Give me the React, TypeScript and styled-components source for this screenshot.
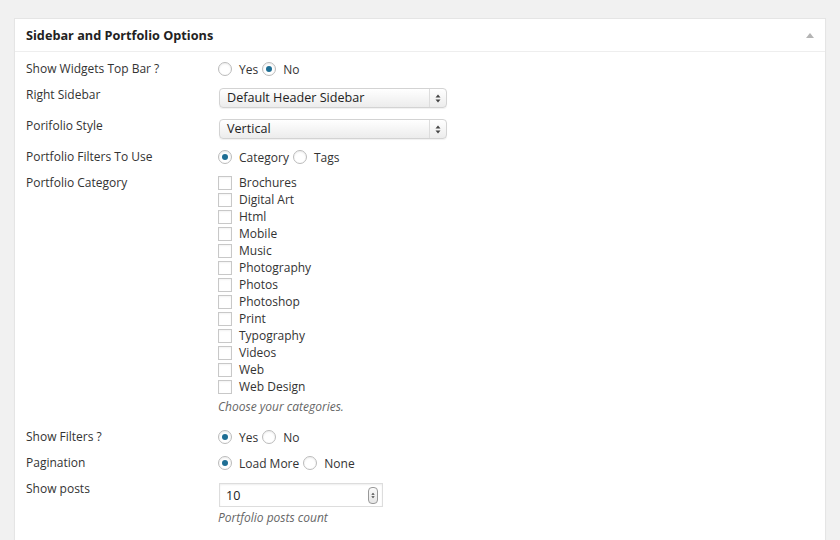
import React from "react";
import styled, { createGlobalStyle } from "styled-components";

const GlobalStyle = createGlobalStyle`
  html, body {
    margin: 0;
    padding: 0;
    background: #f1f1f1;
  }
  body {
    font-family: "Open Sans", "Liberation Sans", sans-serif;
    font-size: 12px;
    color: #444;
  }
`;

const Page = styled.div`
  padding: 18px 14px 0;
  height: 540px;
  box-sizing: border-box;
  overflow: hidden;
`;

const Panel = styled.div`
  background: #fff;
  border: 1px solid #e5e5e5;
  box-shadow: 0 1px 1px rgba(0, 0, 0, 0.04);
  min-height: 560px;
`;

const Header = styled.div`
  display: flex;
  align-items: center;
  justify-content: space-between;
  height: 32px;
  padding: 0 11px;
  border-bottom: 1px solid #eee;
`;

const Title = styled.h3`
  margin: 0;
  font-size: 12.7px;
  font-weight: 700;
  color: #222;
`;

const Toggle = styled.span`
  width: 0;
  height: 0;
  border-left: 4px solid transparent;
  border-right: 4px solid transparent;
  border-bottom: 5px solid #b4b4b4;
`;

const Body = styled.div`
  padding: 4px 11px 0;
`;

const Row = styled.div`
  display: grid;
  grid-template-columns: 192px 1fr;
  padding: 4px 0;
`;

const Label = styled.div`
  line-height: 18px;
  color: #333;
`;

const Control = styled.div`
  display: flex;
  flex-direction: column;
  align-items: flex-start;
`;

const RadioGroup = styled.div`
  display: flex;
  align-items: center;
  height: 18px;
  color: #333;
`;

const RadioOption = styled.label`
  display: flex;
  align-items: center;
  margin-right: 4px;
`;

const RadioCircle = styled.span<{ $checked?: boolean }>`
  position: relative;
  width: 12px;
  height: 12px;
  border: 1px solid #bbb;
  border-radius: 50%;
  background: #fff;
  box-shadow: inset 0 1px 2px rgba(0, 0, 0, 0.08);
  margin-right: 7px;
  &::after {
    content: "";
    display: ${(p) => (p.$checked ? "block" : "none")};
    position: absolute;
    left: 3px;
    top: 3px;
    width: 6px;
    height: 6px;
    border-radius: 50%;
    background: #1e6e94;
  }
`;

const Select = styled.div`
  display: flex;
  align-items: stretch;
  width: 228px;
  height: 20px;
  margin: 2px 0 1px 1px;
  box-sizing: border-box;
  border: 1px solid #d3d3d3;
  border-radius: 4px;
  background: linear-gradient(#ffffff, #ececec);
  box-shadow: 0 1px 1px rgba(0, 0, 0, 0.06);
  color: #222;
  font-size: 12.6px;
`;

const SelectValue = styled.span`
  flex: 1;
  padding-left: 7px;
  line-height: 18px;
`;

const SelectArrows = styled.span`
  width: 16px;
  border-left: 1px solid #ddd;
  display: flex;
  align-items: center;
  justify-content: center;
`;

const CheckList = styled.div`
  display: flex;
  flex-direction: column;
`;

const CheckItem = styled.label`
  display: flex;
  align-items: center;
  height: 17px;
  color: #333;
`;

const CheckBox = styled.span`
  width: 12px;
  height: 12px;
  border: 1px solid #c8c8c8;
  background: #fff;
  box-shadow: inset 0 1px 2px rgba(0, 0, 0, 0.05);
  margin-right: 7px;
`;

const Description = styled.p<{ $top: number; $bottom?: number }>`
  margin: ${(p) => p.$top}px 0 ${(p) => p.$bottom ?? 0}px;
  line-height: 18px;
  font-style: italic;
  color: #666;
`;

const NumberInput = styled.div`
  display: flex;
  align-items: center;
  width: 164px;
  height: 24px;
  margin: 3px 0 0 1px;
  box-sizing: border-box;
  border: 1px solid #ddd;
  box-shadow: inset 0 1px 2px rgba(0, 0, 0, 0.07);
  padding: 0 4px 0 6px;
  color: #222;
  font-size: 12.6px;
`;

const NumberValue = styled.span`
  flex: 1;
`;

const Spinner = styled.span`
  width: 8px;
  height: 15px;
  border: 1px solid #999;
  border-radius: 4px;
  background: linear-gradient(#fafafa, #e6e6e6);
  display: flex;
  align-items: center;
  justify-content: center;
`;

const Arrows = ({ size }: { size: number }) => (
  <svg width={size} height={size + 3} viewBox="0 0 6 9">
    <path d="M3 0.5 L5.5 3.5 H0.5 Z" fill="#444" />
    <path d="M3 8.5 L5.5 5.5 H0.5 Z" fill="#444" />
  </svg>
);

const Radios = ({ options, checked }: { options: string[]; checked: number }) => (
  <RadioGroup>
    {options.map((o, i) => (
      <RadioOption key={o}>
        <RadioCircle $checked={i === checked} />
        {o}
      </RadioOption>
    ))}
  </RadioGroup>
);

const categories = [
  "Brochures",
  "Digital Art",
  "Html",
  "Mobile",
  "Music",
  "Photography",
  "Photos",
  "Photoshop",
  "Print",
  "Typography",
  "Videos",
  "Web",
  "Web Design",
];

const App = () => (
  <Page>
    <GlobalStyle />
    <Panel>
      <Header>
        <Title>Sidebar and Portfolio Options</Title>
        <Toggle />
      </Header>
      <Body>
        <Row>
          <Label>Show Widgets Top Bar ?</Label>
          <Control>
            <Radios options={["Yes", "No"]} checked={1} />
          </Control>
        </Row>
        <Row>
          <Label>Right Sidebar</Label>
          <Control>
            <Select>
              <SelectValue>Default Header Sidebar</SelectValue>
              <SelectArrows>
                <Arrows size={6} />
              </SelectArrows>
            </Select>
          </Control>
        </Row>
        <Row>
          <Label>Porifolio Style</Label>
          <Control>
            <Select>
              <SelectValue>Vertical</SelectValue>
              <SelectArrows>
                <Arrows size={6} />
              </SelectArrows>
            </Select>
          </Control>
        </Row>
        <Row>
          <Label>Portfolio Filters To Use</Label>
          <Control>
            <Radios options={["Category", "Tags"]} checked={0} />
          </Control>
        </Row>
        <Row>
          <Label>Portfolio Category</Label>
          <Control>
            <CheckList>
              {categories.map((c) => (
                <CheckItem key={c}>
                  <CheckBox />
                  {c}
                </CheckItem>
              ))}
            </CheckList>
            <Description $top={3} $bottom={4}>Choose your categories.</Description>
          </Control>
        </Row>
        <Row>
          <Label>Show Filters ?</Label>
          <Control>
            <Radios options={["Yes", "No"]} checked={0} />
          </Control>
        </Row>
        <Row>
          <Label>Pagination</Label>
          <Control>
            <Radios options={["Load More", "None"]} checked={0} />
          </Control>
        </Row>
        <Row>
          <Label>Show posts</Label>
          <Control>
            <NumberInput>
              <NumberValue>10</NumberValue>
              <Spinner>
                <Arrows size={4} />
              </Spinner>
            </NumberInput>
            <Description $top={2}>Portfolio posts count</Description>
          </Control>
        </Row>
      </Body>
    </Panel>
  </Page>
);

export default App;
